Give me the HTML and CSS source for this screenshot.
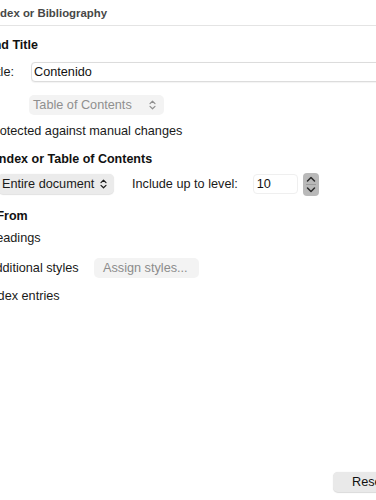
FILE: index.html
```html
<!DOCTYPE html>
<html lang="es">
<head>
    <meta charset="UTF-8">
    <title>Table of Contents, Index or Bibliography</title>
    <link rel="stylesheet" href="styles.css">
</head>
<body>
<div class="dialog">
    <div class="titlebar">
        <span class="titlebar-text">Index or Bibliography</span>
    </div>

    <div class="heading heading-first">Type and Title</div>
    <div class="row title-row">
        <label class="field-label">Title:</label>
        <input class="text-input" type="text" value="Contenido">
    </div>
    <div class="row type-row">
        <div class="select select-disabled">
            <span>Table of Contents</span>
            <svg class="chev" width="7" height="10" viewBox="0 0 7 10"><path d="M1 3.6 L3.5 1.2 L6 3.6 M1 6.4 L3.5 8.8 L6 6.4" fill="none" stroke="currentColor" stroke-width="1.2" stroke-linecap="round" stroke-linejoin="round"/></svg>
        </div>
    </div>
    <div class="row check-row protected-row">
        <span class="checkbox"></span>
        <span>Protected against manual changes</span>
    </div>

    <div class="heading heading-create">Create Index or Table of Contents</div>
    <div class="row scope-row">
        <div class="select select-scope">
            <span>Entire document</span>
            <svg class="chev" width="7" height="10" viewBox="0 0 7 10"><path d="M1 3.6 L3.5 1.2 L6 3.6 M1 6.4 L3.5 8.8 L6 6.4" fill="none" stroke="currentColor" stroke-width="1.2" stroke-linecap="round" stroke-linejoin="round"/></svg>
        </div>
        <span class="level-label">Include up to level:</span>
        <input class="level-input" type="text" value="10">
        <div class="spinner">
            <svg width="16" height="23" viewBox="0 0 16 23"><path d="M4.5 8 L8 4.5 L11.5 8 M4.5 15 L8 18.5 L11.5 15" fill="none" stroke="#2b2b2b" stroke-width="1.5" stroke-linecap="round" stroke-linejoin="round"/><path d="M3 11.5 H13" stroke="#9c9c9c" stroke-width="1"/></svg>
        </div>
    </div>

    <div class="heading heading-from">Create From</div>
    <div class="row check-row headings-row">
        <span class="checkbox"></span>
        <span>Headings</span>
    </div>
    <div class="row check-row styles-row">
        <span class="checkbox"></span>
        <span class="styles-label">Additional styles</span>
        <button class="btn btn-disabled">Assign styles...</button>
    </div>
    <div class="row check-row entries-row">
        <span class="checkbox"></span>
        <span>Index entries</span>
    </div>

    <div class="footer">
        <button class="btn reset-btn">Reset</button>
    </div>
</div>
</body>
</html>
```

FILE: styles.css
```css
html, body {
    margin: 0;
    padding: 0;
    background: #fff;
}
body {
    width: 376px;
    height: 500px;
    overflow: hidden;
    font-family: "Liberation Sans", Arial, sans-serif;
    font-size: 12.7px;
    color: #1a1a1a;
}
.dialog {
    display: flex;
    flex-direction: column;
    width: 480px;
    height: 500px;
    margin-left: -45px;
}
.titlebar {
    height: 25px;
    border-bottom: 1px solid #e4e4e4;
    display: flex;
    align-items: center;
    margin-left: -20px;
    padding-left: 55px;
}
.titlebar-text {
    font-weight: bold;
    font-size: 11.4px;
    color: #474747;
}
.heading {
    height: 18px;
    line-height: 18px;
    font-weight: bold;
    font-size: 12.5px;
    color: #111;
}
.heading-first {
    margin-top: 10px;
}
.heading-create {
    margin-top: 10px;
    margin-left: -2px;
}
.heading-from {
    margin-top: 13px;
    margin-left: -1px;
}
.row {
    display: flex;
    align-items: center;
    height: 20px;
}
.title-row {
    margin-top: 8px;
    padding-left: 32px;
}
.field-label {
    width: 44px;
}
.text-input {
    width: 380px;
    height: 20px;
    box-sizing: border-box;
    border: 1px solid #dcdcdc;
    border-radius: 4px;
    padding: 0 2px;
    font-family: inherit;
    font-size: 12.7px;
    color: #111;
    outline: none;
    box-shadow: 0 0.5px 1px rgba(0,0,0,0.05);
}
.type-row {
    margin-top: 13px;
    padding-left: 74px;
}
.select {
    display: flex;
    align-items: center;
    justify-content: space-between;
    height: 20px;
    box-sizing: border-box;
    border-radius: 5px;
}
.select-disabled {
    width: 135px;
    padding: 0 8px 0 4px;
    background: #f3f3f3;
    color: #8f8f8f;
}
.chev {
    display: block;
}
.check-row {
    height: 18px;
    padding-left: 10px;
}
.checkbox {
    width: 14px;
    height: 14px;
    box-sizing: border-box;
    border: 1px solid #c4c4c4;
    border-radius: 3px;
    margin-right: 8px;
    background: #fff;
}
.protected-row {
    margin-top: 7px;
}
.scope-row {
    margin-top: 6px;
    padding-left: 43px;
}
.select-scope {
    width: 116px;
    padding: 0 7px 0 4px;
    background: #ebebeb;
    color: #1a1a1a;
    box-shadow: 0 0.5px 1px rgba(0,0,0,0.12);
}
.level-label {
    margin-left: 18px;
}
.level-input {
    width: 45px;
    height: 20px;
    box-sizing: border-box;
    margin-left: 15px;
    border: 1px solid #efefef;
    border-radius: 4px;
    padding: 0 3px;
    font-family: inherit;
    font-size: 12.7px;
    color: #111;
    outline: none;
}
.spinner {
    width: 16px;
    height: 23px;
    margin-left: 5px;
    border-radius: 4px;
    background: #b9b9b9;
}
.spinner svg {
    display: block;
}
.headings-row {
    margin-top: 4px;
}
.styles-row {
    margin-top: 11px;
    height: 20px;
}
.styles-label {
    width: 107px;
}
.btn {
    height: 20px;
    border: none;
    border-radius: 5px;
    font-family: inherit;
    font-size: 12.7px;
    padding: 0 8px;
}
.btn-disabled {
    width: 105px;
    background: #f3f3f3;
    color: #8c8c8c;
    text-align: left;
    padding-left: 9px;
}
.entries-row {
    margin-top: 9px;
}
.footer {
    margin-top: auto;
    margin-bottom: 8px;
    padding-left: 378px;
}
.reset-btn {
    width: 80px;
    background: #e9e9e9;
    color: #111;
    text-align: left;
    padding-left: 19px;
    box-shadow: 0 0.5px 1px rgba(0,0,0,0.15);
}
```
